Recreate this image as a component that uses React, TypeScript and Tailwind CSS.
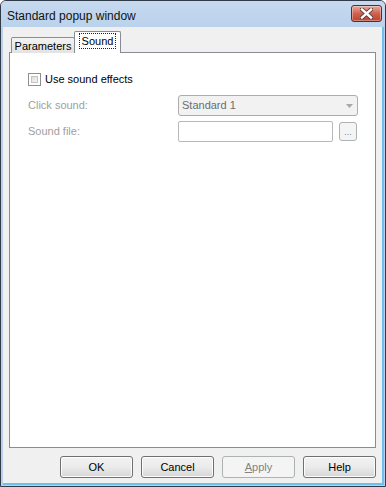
import React from "react";

function CloseButton() {
    return (
        <div className="w-[31px] h-[17px] mt-[4px] mr-[3px] rounded-[3px] border border-[#5c2a2a] bg-gradient-to-b from-[#e9a99b] via-[#d0614d] to-[#c0402c] flex items-center justify-center shadow-[inset_0_0_0_1px_rgba(255,255,255,0.35)]">
            <svg width="13" height="11" viewBox="0 0 13 11">
                <path d="M2 1.5 L11 9.5 M11 1.5 L2 9.5" stroke="#5a3a3a" strokeWidth="4.2" strokeLinecap="square" />
                <path d="M2 1.5 L11 9.5 M11 1.5 L2 9.5" stroke="#ffffff" strokeWidth="2.4" strokeLinecap="square" />
            </svg>
        </div>
    );
}

function DlgButton(props: { label: string; disabled?: boolean }) {
    const { label, disabled } = props;
    if (disabled) {
        return (
            <div className="w-[73px] h-[22px] rounded-[3px] border border-[#adb2b5] bg-[#f4f4f4] flex items-center justify-center text-[#838383]">
                <span><span className="underline">A</span>pply</span>
            </div>
        );
    }
    return (
        <div className="w-[73px] h-[22px] rounded-[3px] border border-[#707070] bg-gradient-to-b from-[#f2f2f2] via-[#ebebeb] to-[#d6d6d6] flex items-center justify-center text-black shadow-[inset_0_0_0_1px_#fcfcfc]">
            {label}
        </div>
    );
}

export default function App() {
    return (
        <div className="w-[386px] h-[487px] flex flex-col border border-[#2f3b48] rounded-t-[6px] overflow-hidden bg-[#b9d1ea] text-[11px] font-['Liberation_Sans',Arial,sans-serif]">
            <div className="h-[26px] flex justify-between bg-gradient-to-b from-[#c6d9ef] to-[#bad2ec]">
                <div className="pl-[6px] pt-[6px] text-[12px] text-[#111]">Standard popup window</div>
                <CloseButton />
            </div>

            <div className="flex-1 ml-[2px] mr-[1px] mb-[1px] bg-[#f0f0f0] flex flex-col px-[6px] pt-[4px] border-b-2 border-r-2 border-[#6cc0ea]">
                {/* tabs */}
                <div className="h-[21px] flex items-end pl-[2px] relative z-10">
                    <div className="h-[16px] w-[64px] -mb-px border border-[#898c95] border-b-0 rounded-t-[2px] bg-gradient-to-b from-[#f3f3f3] to-[#e3e3e3] flex items-center justify-center text-black pt-[1px]">
                        Parameters
                    </div>
                    <div className="h-[22px] w-[47px] -mb-px -ml-px border border-[#898c95] border-b-0 rounded-t-[2px] bg-white flex items-start justify-center pt-[2px]">
                        <span className="px-[2px] leading-[14px] outline outline-1 outline-dotted outline-[#222]">Sound</span>
                    </div>
                </div>

                {/* panel */}
                <div className="flex-1 border border-[#898c95] bg-white pl-[18px] pr-[17px] pt-[20px]">
                    <div className="flex items-center h-[13px]">
                        <div className="w-[13px] h-[13px] border border-[#8f8f8f] bg-white p-[2px]">
                            <div className="w-full h-full bg-gradient-to-br from-[#dcdcdc] to-[#f7f7f7] border border-[#c4c4c4]"></div>
                        </div>
                        <span className="ml-[4px] text-black">Use sound effects</span>
                    </div>

                    <div className="flex items-center mt-[9px] h-[21px]">
                        <span className="w-[150px] text-[#a0a0a0]">Click sound:</span>
                        <div className="w-[180px] h-[21px] rounded-[3px] border border-[#adadad] bg-[#f2f2f2] flex items-center justify-between pl-[3px] pr-[4px] text-[#6d6d6d]">
                            <span>Standard 1</span>
                            <svg width="7" height="4" viewBox="0 0 7 4">
                                <path d="M0 0 L7 0 L3.5 4 Z" fill="#a8a8a8" />
                            </svg>
                        </div>
                    </div>

                    <div className="flex items-center mt-[5px] h-[21px]">
                        <span className="w-[150px] text-[#a0a0a0]">Sound file:</span>
                        <div className="w-[155px] h-[21px] rounded-[2px] border border-[#b8b8b8] bg-white"></div>
                        <div className="ml-[6px] w-[18px] h-[19px] rounded-[3px] border border-[#adb2b5] bg-[#f4f4f4] flex items-end justify-center pb-[3px] text-[#838383] text-[9px] leading-none">
                            ...
                        </div>
                    </div>
                </div>

                {/* buttons */}
                <div className="flex justify-end gap-[8px] mt-[8px] mb-[5px]">
                    <DlgButton label="OK" />
                    <DlgButton label="Cancel" />
                    <DlgButton label="Apply" disabled />
                    <DlgButton label="Help" />
                </div>
            </div>
        </div>
    );
}
